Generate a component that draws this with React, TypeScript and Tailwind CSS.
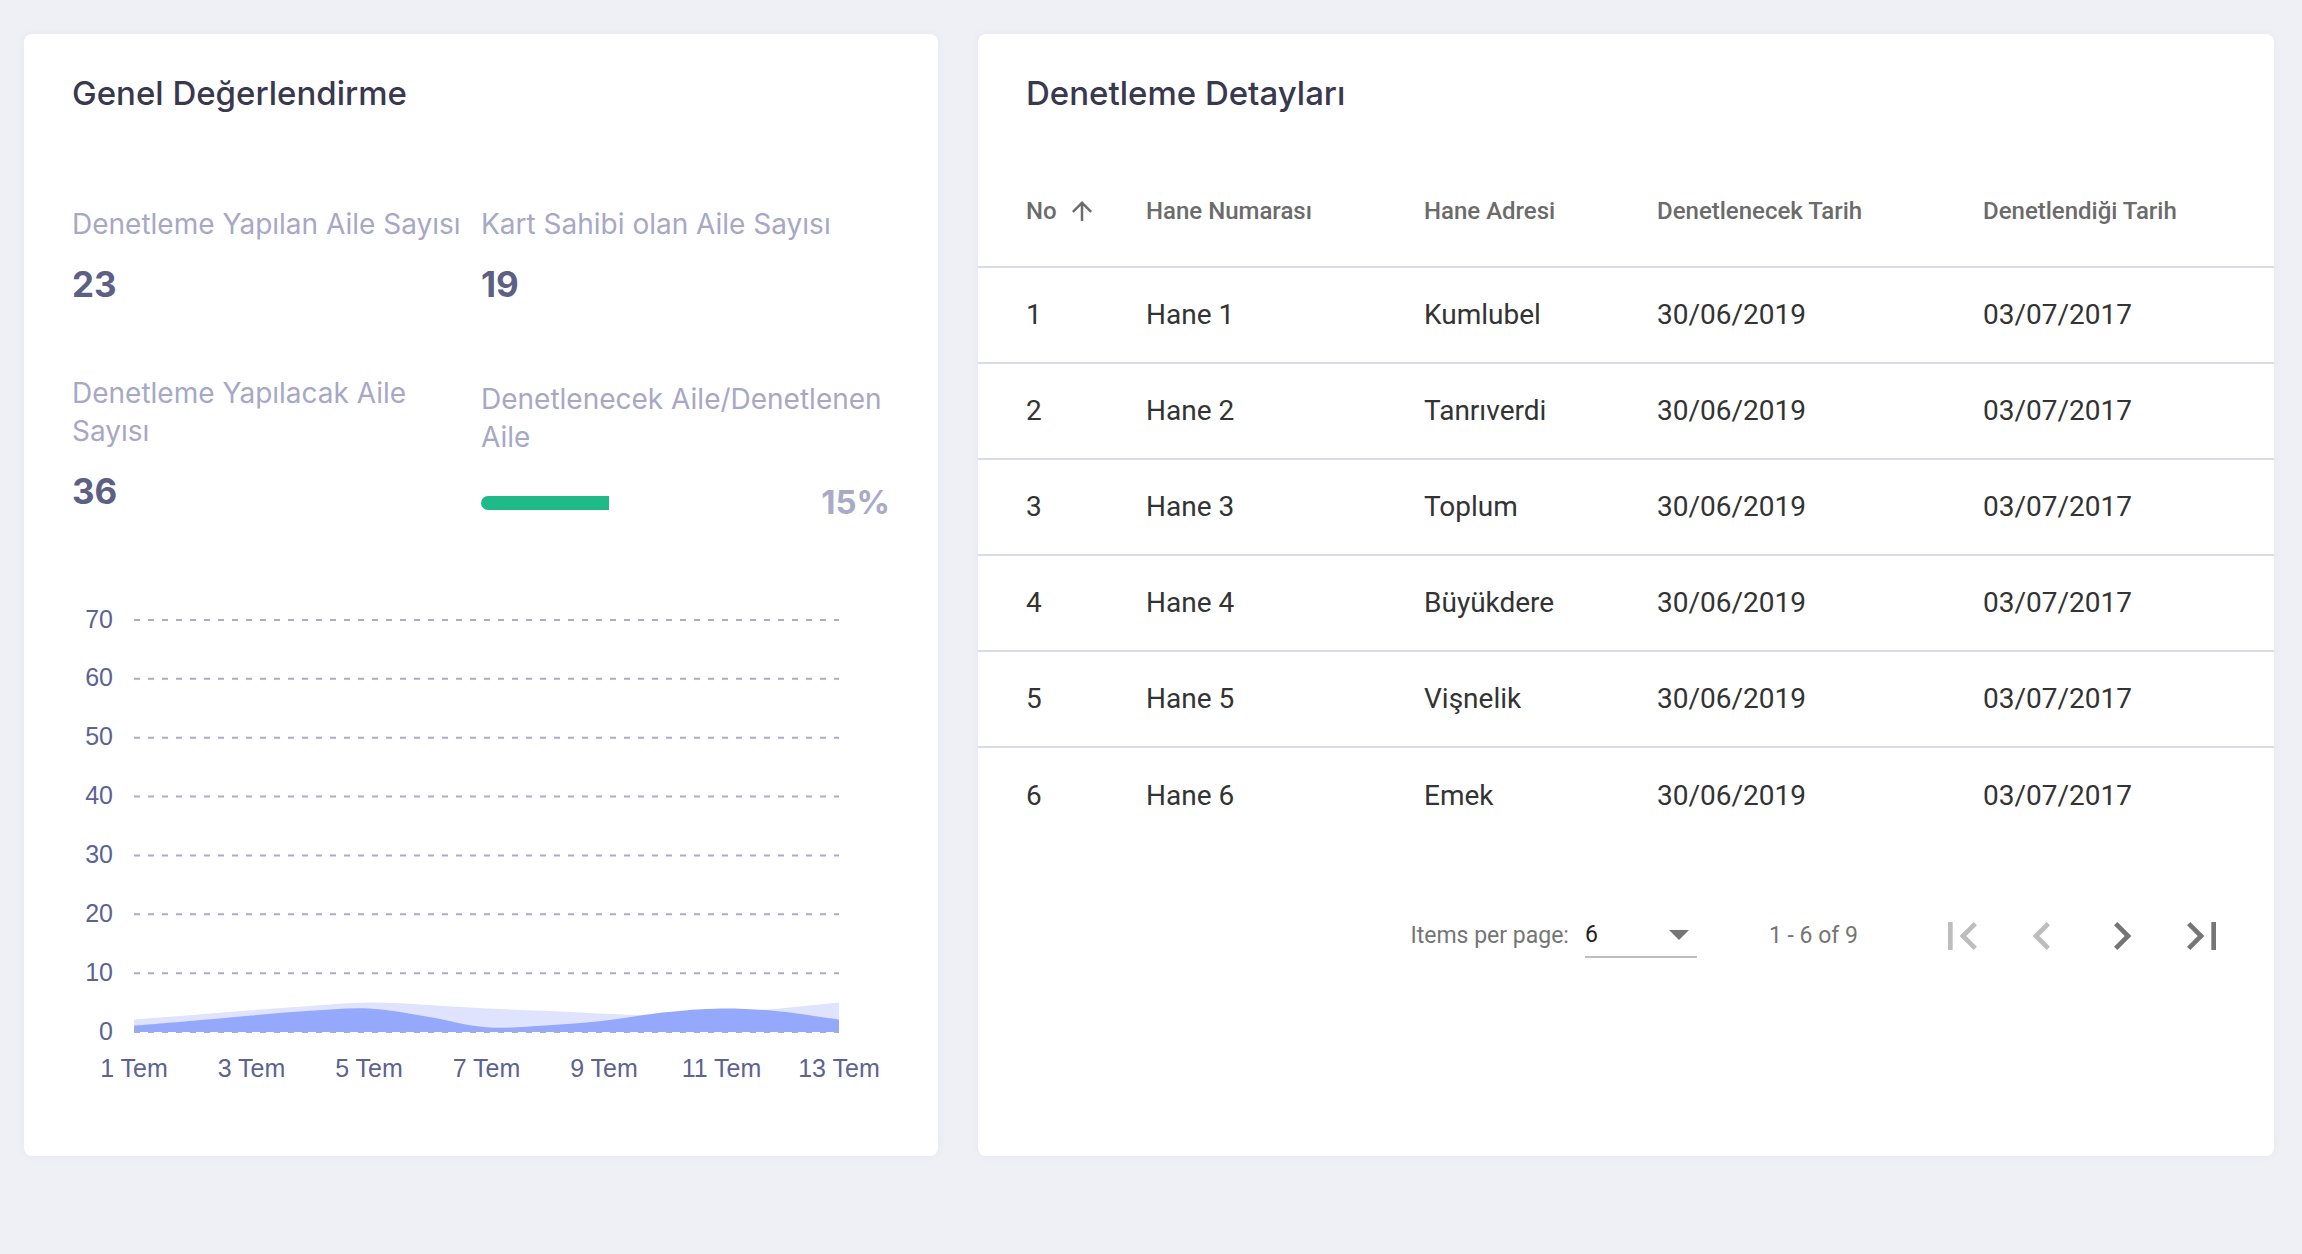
import React from "react";

const sans = "font-['Inter',sans-serif]";
const roboto = "font-['Roboto',sans-serif]";

// chart geometry (svg coordinates)
const X0 = 62;
const STEP = 58.75;
const BASE = 437;
const UNIT = 5.886;

const dark = [1.05, 1.9, 2.8, 3.6, 4.0, 2.6, 0.8, 1.1, 1.9, 3.3, 4.0, 3.5, 2.1];
const light = [2.1, 2.9, 3.7, 4.4, 5.0, 4.6, 4.0, 3.6, 3.1, 2.8, 3.2, 4.0, 5.0];

function areaPath(values: number[]) {
  const pts = values.map((v, i) => ({ x: X0 + i * STEP, y: BASE - v * UNIT }));
  let d = `M${pts[0].x},${pts[0].y}`;
  for (let i = 0; i < pts.length - 1; i++) {
    const p0 = pts[i - 1] || pts[i];
    const p1 = pts[i];
    const p2 = pts[i + 1];
    const p3 = pts[i + 2] || p2;
    const c1x = p1.x + (p2.x - p0.x) / 6;
    const c1y = p1.y + (p2.y - p0.y) / 6;
    const c2x = p2.x - (p3.x - p1.x) / 6;
    const c2y = p2.y - (p3.y - p1.y) / 6;
    d += ` C${c1x},${c1y} ${c2x},${c2y} ${p2.x},${p2.y}`;
  }
  const last = pts[pts.length - 1];
  d += ` L${last.x},${BASE} L${pts[0].x},${BASE} Z`;
  return d;
}

function Chart() {
  const ticks = [70, 60, 50, 40, 30, 20, 10, 0];
  const days = [1, 3, 5, 7, 9, 11, 13];
  return (
    <svg width={814} height={500} className="block">
      <path d={areaPath(light)} fill="#dfe3fd" />
      <path d={areaPath(dark)} fill="#94a8fc" />
      {ticks.map((t) => {
        const y = BASE - t * UNIT;
        return (
          <g key={t}>
            <line
              x1={X0}
              x2={X0 + 12 * STEP}
              y1={y}
              y2={y}
              stroke="#aaabd0"
              strokeWidth={2}
              strokeDasharray="6 8"
            />
            <text
              x={41}
              y={y + 1}
              textAnchor="end"
              dominantBaseline="middle"
              fill="#5c6392"
              fontSize={25}
              fontFamily="'Liberation Sans', Arial, sans-serif"
            >
              {t}
            </text>
          </g>
        );
      })}
      {days.map((d, i) => (
        <text
          key={d}
          x={X0 + i * 2 * STEP}
          y={475}
          textAnchor="middle"
          dominantBaseline="middle"
          fill="#5c6392"
          fontSize={25}
          fontFamily="'Liberation Sans', Arial, sans-serif"
        >
          {d} Tem
        </text>
      ))}
    </svg>
  );
}

function Stat({ label, value }: { label: string; value: string }) {
  return (
    <div>
      <div className="text-[28px] leading-[38px] text-[#a6a8c6]">{label}</div>
      <div className="mt-[19px] text-[35px] leading-[44px] font-bold text-[#5c6184]">
        {value}
      </div>
    </div>
  );
}

const rows = [
  { no: 1, hane: "Hane 1", adres: "Kumlubel" },
  { no: 2, hane: "Hane 2", adres: "Tanrıverdi" },
  { no: 3, hane: "Hane 3", adres: "Toplum" },
  { no: 4, hane: "Hane 4", adres: "Büyükdere" },
  { no: 5, hane: "Hane 5", adres: "Vişnelik" },
  { no: 6, hane: "Hane 6", adres: "Emek" },
];

const cols = "grid grid-cols-[120px_278px_233px_326px_1fr] items-center px-12";

function PageIcon({ d, color }: { d: string; color: string }) {
  return (
    <button className="w-[80px] h-[80px] flex items-center justify-center">
      <svg width={56} height={56} viewBox="0 0 24 24" fill={color}>
        <path d={d} />
      </svg>
    </button>
  );
}

export default function App() {
  return (
    <div className="min-h-screen bg-[#eff0f6] pt-[34px] pl-6 pr-7 pb-10">
      <div className="flex gap-10 items-stretch">
        {/* left card */}
        <div
          className={`w-[914px] bg-white rounded-lg shadow-[0_0_10px_rgba(40,40,90,0.04)] px-12 pt-[39px] pb-[61px] ${sans}`}
        >
          <h2 className="text-[33px] leading-[40px] font-medium text-[#39384e]">
            Genel Değerlendirme
          </h2>
          <div className="grid grid-cols-2 mt-[92px]">
            <Stat label="Denetleme Yapılan Aile Sayısı" value="23" />
            <Stat label="Kart Sahibi olan Aile Sayısı" value="19" />
          </div>
          <div className="grid grid-cols-2 mt-[68px]">
            <Stat label="Denetleme Yapılacak Aile Sayısı" value="36" />
            <div className="pt-[6px]">
              <div className="text-[28px] leading-[38px] text-[#a6a8c6]">
                Denetlenecek Aile/Denetlenen Aile
              </div>
              <div className="mt-[25px] h-[44px] flex items-center justify-between">
                <div className="w-[128px] h-[14px] bg-[#1fba87] rounded-l-full" />
                <span className="text-[33px] font-bold text-[#a9abc6]">15%</span>
              </div>
            </div>
          </div>
          <div className="mt-[70px]">
            <Chart />
          </div>
        </div>

        {/* right card */}
        <div className="flex-1 bg-white rounded-lg shadow-[0_0_10px_rgba(40,40,90,0.04)] pt-[39px]">
          <h2
            className={`px-12 text-[33px] leading-[40px] font-medium text-[#39384e] ${sans}`}
          >
            Denetleme Detayları
          </h2>
          <div className={`mt-[43px] ${roboto}`}>
            <div
              className={`${cols} h-[112px] border-b-2 border-[#d9dce7] text-[24px] font-medium text-[#6b6b6b]`}
            >
              <div className="flex items-center">
                No
                <svg
                  width={30}
                  height={30}
                  viewBox="0 0 24 24"
                  fill="#6b6b6b"
                  className="ml-[10px]"
                >
                  <path d="M4 12l1.41 1.41L11 7.83V20h2V7.83l5.58 5.59L20 12l-8-8-8 8z" />
                </svg>
              </div>
              <div>Hane Numarası</div>
              <div>Hane Adresi</div>
              <div>Denetlenecek Tarih</div>
              <div>Denetlendiği Tarih</div>
            </div>
            {rows.map((r, i) => (
              <div
                key={r.no}
                className={`${cols} h-[96px] text-[28px] text-[#333333] ${
                  i < rows.length - 1 ? "border-b-2 border-[#d9dce7]" : ""
                }`}
              >
                <div>{r.no}</div>
                <div>{r.hane}</div>
                <div>{r.adres}</div>
                <div>30/06/2019</div>
                <div>03/07/2017</div>
              </div>
            ))}
            <div className="mt-[52px] h-[80px] flex items-center justify-end pr-8 text-[23px] text-[#757575]">
              <span>Items per page:</span>
              <div className="ml-[16px] w-[112px] h-[44px] relative flex items-center border-b-2 border-[#bdbdc2]">
                <span className="text-[#212121]">6</span>
                <svg
                  width={20}
                  height={10}
                  viewBox="0 0 20 10"
                  className="absolute right-[8px] top-[16px]"
                >
                  <polygon points="0,0 20,0 10,10" fill="#757575" />
                </svg>
              </div>
              <span className="ml-[72px]">1 - 6 of 9</span>
              <div className="ml-[64px] flex">
                <PageIcon
                  color="#bdbdbd"
                  d="M18.41 16.59L13.82 12l4.59-4.59L17 6l-6 6 6 6zM6 6h2v12H6z"
                />
                <PageIcon
                  color="#bdbdbd"
                  d="M15.41 7.41L14 6l-6 6 6 6 1.41-1.41L10.83 12z"
                />
                <PageIcon
                  color="#757575"
                  d="M10 6L8.59 7.41 13.17 12l-4.58 4.59L10 18l6-6z"
                />
                <PageIcon
                  color="#757575"
                  d="M5.59 7.41L10.18 12l-4.59 4.59L7 18l6-6-6-6zM16 6h2v12h-2z"
                />
              </div>
            </div>
          </div>
        </div>
      </div>
    </div>
  );
}
